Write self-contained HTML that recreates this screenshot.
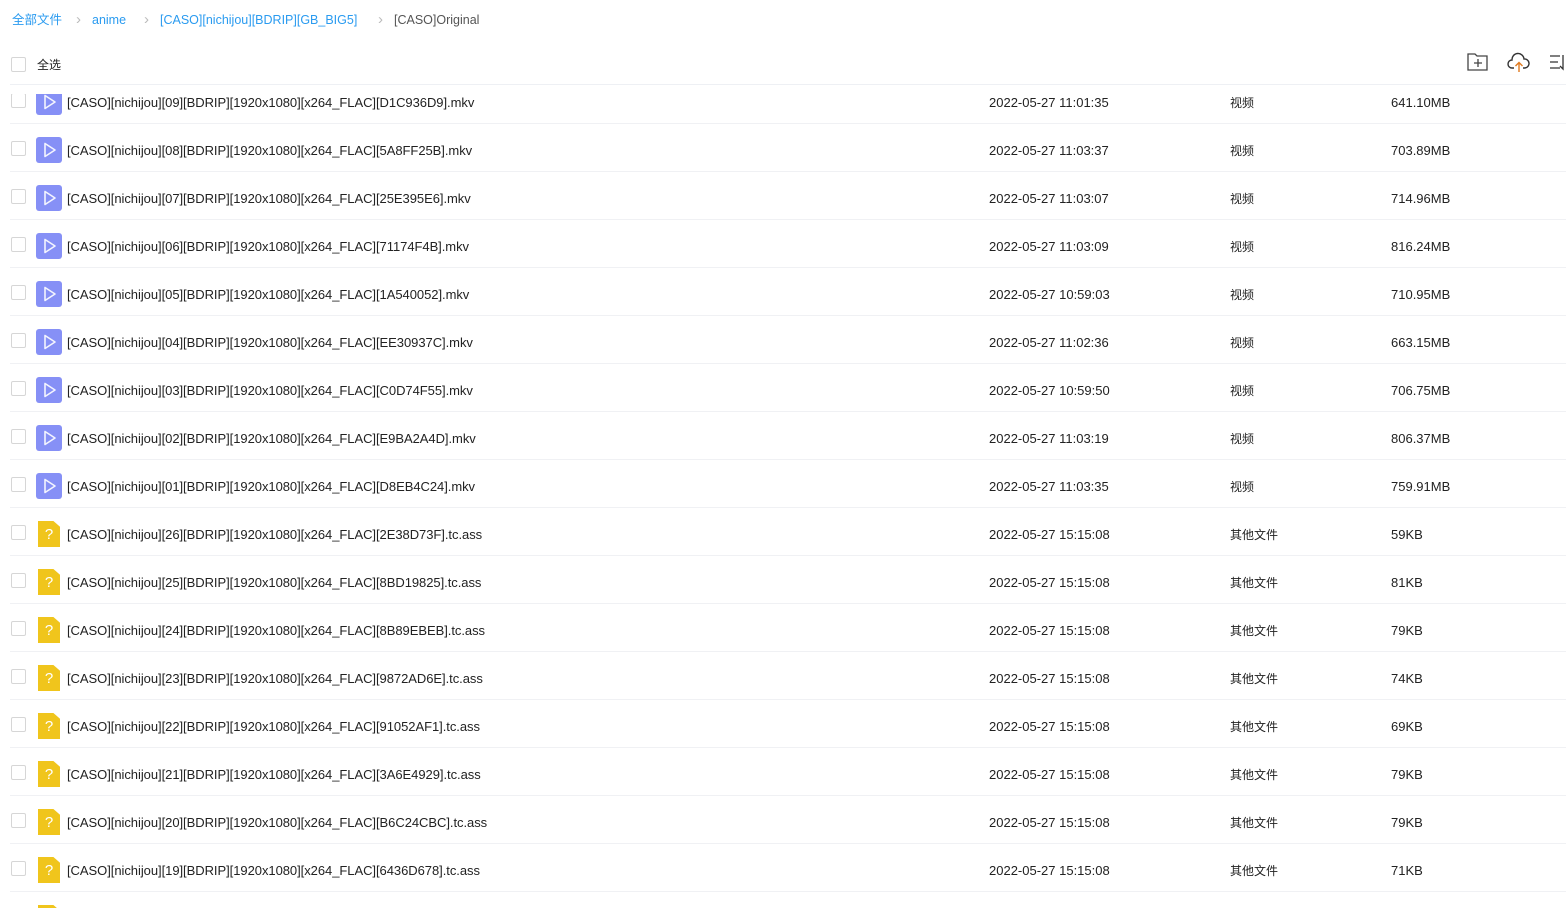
<!DOCTYPE html>
<html><head><meta charset="utf-8"><style>
*{margin:0;padding:0;box-sizing:border-box}
body{width:1566px;height:914px;overflow:hidden;background:#fff;font-family:"Liberation Sans","Noto Sans CJK SC",sans-serif;color:#222;font-size:13px;position:relative}
.bc{position:absolute;top:12px;left:12px;font-size:12.5px;white-space:nowrap}
.bc span{position:absolute;top:0;line-height:16px}
.a{color:#2a9bf0}
.sep{color:#bbb;font-size:15px}
.cb{position:absolute;width:15px;height:15px;border:1px solid #d6d6d6;border-radius:2px;background:#fff}
.hdr{position:absolute;top:84px;left:10px;right:0;height:1px;background:#eef0f4}
.list{position:absolute;top:94px;left:0;width:1566px;height:814px;overflow:hidden}
.row{position:absolute;left:0;width:1566px;height:48px}
.row .line{position:absolute;left:10px;right:0;top:45px;height:1px;background:#f0f1f4}
.row .t{position:absolute;top:18px;white-space:nowrap;line-height:14px}
.vi{position:absolute;left:36px;top:11px;width:26px;height:26px;border-radius:3px;background:#8690f6}
.fi{position:absolute;left:38px;top:11px;width:22px;height:26px;background:#f0c51c;clip-path:polygon(0 0,70% 0,100% 22%,100% 100%,0 100%);color:#fff;font-size:15px;text-align:center;line-height:27px}
</style></head><body>
<div class="bc">
<span class="a" style="left:0">全部文件</span>
<span class="sep" style="left:64px">›</span>
<span class="a" style="left:80px">anime</span>
<span class="sep" style="left:132px">›</span>
<span class="a" style="left:148px">[CASO][nichijou][BDRIP][GB_BIG5]</span>
<span class="sep" style="left:366px">›</span>
<span style="left:382px;color:#555">[CASO]Original</span>
</div>
<div class="cb" style="left:11px;top:57px"></div>
<div style="position:absolute;left:37px;top:57px;font-size:12px;line-height:16px">全选</div>
<svg style="position:absolute;left:1467px;top:52px" width="22" height="20" viewBox="0 0 22 20" fill="none" stroke="#444" stroke-width="1.3"><path d="M1 2h7l2 2h10v14H1z"/><path d="M11 7v8M7 11h8"/></svg>
<svg style="position:absolute;left:1507px;top:50px" width="24" height="24" viewBox="0 0 24 24" fill="none" stroke="#333" stroke-width="1.4"><path d="M7 18H5a4 4 0 0 1 0-8 6 6 0 0 1 12-1 4.5 4.5 0 0 1 1 9h-2"/><path d="M12 22v-9M8.5 16l3.5-3.5 3.5 3.5" stroke="#e07a1f"/></svg>
<svg style="position:absolute;left:1549px;top:54px" width="17" height="18" viewBox="0 0 17 18" fill="none" stroke="#333" stroke-width="1.3"><path d="M1 2h10M1 8h8M1 14h10M14 1v14l-3-3"/></svg>
<div class="hdr"></div>
<div class="list" id="list"></div>
<script>
var v=[["09","D1C936D9","11:01:35","641.10MB"],["08","5A8FF25B","11:03:37","703.89MB"],["07","25E395E6","11:03:07","714.96MB"],["06","71174F4B","11:03:09","816.24MB"],["05","1A540052","10:59:03","710.95MB"],["04","EE30937C","11:02:36","663.15MB"],["03","C0D74F55","10:59:50","706.75MB"],["02","E9BA2A4D","11:03:19","806.37MB"],["01","D8EB4C24","11:03:35","759.91MB"]];
var a=[["26","2E38D73F","59KB"],["25","8BD19825","81KB"],["24","8B89EBEB","79KB"],["23","9872AD6E","74KB"],["22","91052AF1","69KB"],["21","3A6E4929","79KB"],["20","B6C24CBC","79KB"],["19","6436D678","71KB"],["18","00000000","70KB"]];
var h="",i=0;
function row(icon,name,date,type,size){var top=-16+48*i;i++;
h+='<div class="row" style="top:'+top+'px"><div class="cb" style="left:11px;top:15px"></div>'+icon+'<div class="t" style="left:67px;letter-spacing:-0.05px">'+name+'</div><div class="t" style="left:989px">'+date+'</div><div class="t" style="left:1230px;font-size:12px">'+type+'</div><div class="t" style="left:1391px">'+size+'</div><div class="line"></div></div>';}
var vi='<div class="vi"><svg width="26" height="26" viewBox="0 0 26 26" fill="none" stroke="#fff" stroke-width="1.6" opacity=".9"><path d="M9 6.5v13l10-6.5z" stroke-linejoin="round"/></svg></div>';
var fi='<div class="fi">?</div>';
v.forEach(function(r){row(vi,"[CASO][nichijou]["+r[0]+"][BDRIP][1920x1080][x264_FLAC]["+r[1]+"].mkv","2022-05-27 "+r[2],"视频",r[3]);});
a.forEach(function(r){row(fi,"[CASO][nichijou]["+r[0]+"][BDRIP][1920x1080][x264_FLAC]["+r[1]+"].tc.ass","2022-05-27 15:15:08","其他文件",r[2]);});
document.getElementById("list").innerHTML=h;
</script>
</body></html>
